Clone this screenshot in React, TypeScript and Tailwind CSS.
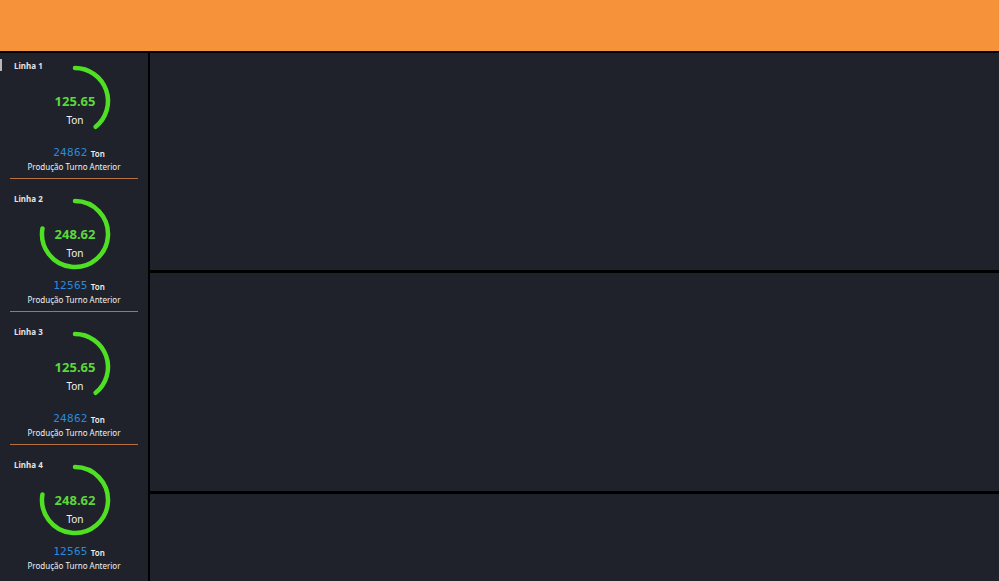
const lines = [
  { name: "Linha 1", value: 125.65, previous: "24862" },
  { name: "Linha 2", value: 248.62, previous: "12565" },
  { name: "Linha 3", value: 125.65, previous: "24862" },
  { name: "Linha 4", value: 248.62, previous: "12565" },
]

// full circle = 320 ton
const GAUGE_MAX = 320

function Gauge({ value }: { value: number }) {
  const r = 33
  const c = 38
  const angle = Math.min(value / GAUGE_MAX, 0.999) * 2 * Math.PI
  const x = c + r * Math.sin(angle)
  const y = c - r * Math.cos(angle)
  const large = angle > Math.PI ? 1 : 0
  const d = `M ${c} ${c - r} A ${r} ${r} 0 ${large} 1 ${x.toFixed(2)} ${y.toFixed(2)}`

  return (
    <div className="relative h-[76px] w-[76px]">
      <svg width="76" height="76" viewBox="0 0 76 76" className="absolute inset-0">
        <path d={d} fill="none" stroke="#4fe024" strokeWidth="4.5" strokeLinecap="round" />
      </svg>
      <div className="absolute inset-0 flex flex-col items-center">
        <div className="mt-[30px] h-[16px] text-[13px] font-bold leading-[16px] text-[#5dd63c]">
          {value.toFixed(2)}
        </div>
        <div className="mt-[5px] h-[12px] text-[10px] leading-[12px] text-[#f2f2f2]">Ton</div>
      </div>
    </div>
  )
}

function LineSection({
  name,
  value,
  previous,
  last,
}: {
  name: string
  value: number
  previous: string
  last: boolean
}) {
  return (
    <div className="mx-[10px] flex h-[132px] flex-col">
      <div className="mt-[14px] h-[10px] pl-[4px] text-[8px] font-bold leading-[10px] text-[#e4e4e4]">{name}</div>
      <div className="-mt-[8px] flex justify-center pl-[2px]">
        <Gauge value={value} />
      </div>
      <div className="mt-[8px] flex h-[12px] items-end justify-center gap-[3px] pl-[10px]">
        <span className="font-['DejaVu_Sans_Mono',monospace] text-[11px] leading-[12px] tracking-[0.3px] text-[#2c8ad8]">
          {previous}
        </span>
        <span className="text-[8px] font-semibold leading-[11px] text-[#f0f0f0]">Ton</span>
      </div>
      <div className="mt-[3px] h-[10px] text-center text-[8px] leading-[10px] text-[#f0f0f0]">
        Produção Turno Anterior
      </div>
      {!last && <div className="mt-auto h-[1px] bg-[#b8703e]" />}
    </div>
  )
}

export default function App() {
  return (
    <div className="flex h-[581px] w-full flex-col overflow-hidden bg-black font-['Noto_Sans',sans-serif]">
      <div className="h-[53px] shrink-0 border-b-2 border-black bg-[#f6923a]" />
      <div className="flex min-h-0 flex-1">
        <aside className="relative w-[150px] shrink-0 overflow-hidden border-r-2 border-black bg-[#1f222a]">
          <div className="absolute left-0 top-[6px] h-[12px] w-[2px] bg-[#b8b8b8]" />
          <div className="-mt-[6px] flex flex-col gap-[1px]">
            {lines.map((l, i) => (
              <LineSection key={l.name} {...l} last={i === lines.length - 1} />
            ))}
          </div>
        </aside>
        <main className="flex flex-1 flex-col gap-[3px] bg-black">
          <div className="h-[217px] bg-[#1f222a]" />
          <div className="h-[218px] bg-[#1f222a]" />
          <div className="flex-1 bg-[#1f222a]" />
        </main>
      </div>
    </div>
  )
}
